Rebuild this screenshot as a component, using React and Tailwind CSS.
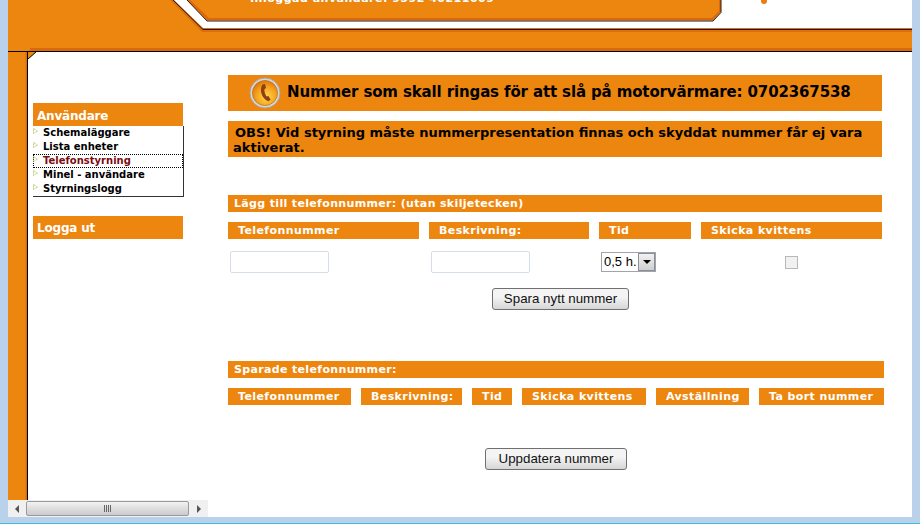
// App.jsx - Motorvärmare telefonstyrning

import React from 'react';

const verdana = "font-['DejaVu_Sans',sans-serif]";

const menuItems = [
  { label: 'Schemaläggare' },
  { label: 'Lista enheter' },
  { label: 'Telefonstyrning', active: true },
  { label: 'Minel - användare' },
  { label: 'Styrningslogg' },
];

const newColumns = [
  { label: 'Telefonnummer', width: 'w-[191px]' },
  { label: 'Beskrivning:', width: 'w-[160px]' },
  { label: 'Tid', width: 'w-[92px]' },
  { label: 'Skicka kvittens', width: 'w-[181px]' },
];

const savedColumns = [
  { label: 'Telefonnummer', width: 'w-[123px]' },
  { label: 'Beskrivning:', width: 'w-[101px]' },
  { label: 'Tid', width: 'w-[40px]' },
  { label: 'Skicka kvittens', width: 'w-[124px]' },
  { label: 'Avställning', width: 'w-[93px]' },
  { label: 'Ta bort nummer', width: 'w-[125px]' },
];

const HeaderArt = () => (
  <svg className="absolute inset-0" width="904" height="52" viewBox="0 0 904 52">
    <rect width="904" height="52" fill="#ec860e" />
    <rect x="22" y="48" width="882" height="3" fill="#d9690c" />
    <polygon points="162,0 194,32 904,32 904,0" fill="#dc6f0c" />
    <polygon points="166,0 195,28 904,28 904,0" fill="#ffffff" />
    <polyline points="165,0 195,29.5 904,29.5" fill="none" stroke="#1a1a1a" strokeWidth="1" />
    <polygon points="179,0 199,20.5 705,20.5 713,12 713,0" fill="#d9690c" />
    <polygon points="182,0 201,18 704,18 711,11 711,0" fill="#ec860e" />
    <polyline points="179,0 199,21 705,21 713,12.5 713,0" fill="none" stroke="#2a1a08" strokeWidth="1" />
    <rect y="51" width="904" height="1" fill="#000000" />
    <circle cx="756" cy="1" r="3" fill="#ec7d12" />
  </svg>
);

const PhoneBadge = () => (
  <svg width="32" height="32" viewBox="0 0 32 32" className="shrink-0">
    <defs>
      <radialGradient id="phoneGlow" cx="55%" cy="65%" r="65%">
        <stop offset="0%" stopColor="#ffd84a" />
        <stop offset="60%" stopColor="#f6a21e" />
        <stop offset="100%" stopColor="#df7408" />
      </radialGradient>
    </defs>
    <circle cx="16" cy="16" r="15" fill="#d8d8d8" stroke="#a8a8a8" strokeWidth="1" />
    <circle cx="16" cy="16" r="12.6" fill="url(#phoneGlow)" stroke="#a86a1a" strokeWidth="0.6" />
    <path
      d="M13.5 7.5 L16 7 L17 11 L15.4 12.2 C15.2 14.6 16 17.4 17.6 19.4 L19.4 19 L21.6 22.4 L19.6 24.2 C16.4 23.8 13.2 20 12.2 15.6 C11.6 12.6 12 9.4 13.5 7.5 Z"
      fill="#8f3f14"
    />
  </svg>
);

const MenuBullet = () => (
  <svg className="absolute left-0 top-[2px]" width="5" height="6" viewBox="0 0 5 6">
    <path d="M0.5 0.5 V5.5 L4.5 3 Z" fill="none" stroke="#b5c26a" strokeWidth="1" strokeDasharray="1 0.6" />
  </svg>
);

const OrangeBar = ({ children, className = '' }) => (
  <div className={`bg-[#ec860e] text-white font-bold text-[11px] leading-[18px] ${className}`}>
    {children}
  </div>
);

const ColumnHead = ({ label, width, pad = 'pl-[11px]' }) => (
  <OrangeBar className={`h-[17px] shrink-0 tracking-[0.4px] ${width} ${pad}`}>{label}</OrangeBar>
);

const WinButton = ({ children, className = '' }) => (
  <button
    type="button"
    className={`h-[22px] rounded-[3px] border border-[#707070] bg-gradient-to-b from-[#f4f4f4] from-40% to-[#d6d6d6] font-['Liberation_Sans',sans-serif] text-[13.33px] leading-[18px] text-[#111111] ${className}`}
  >
    {children}
  </button>
);

const Sidebar = () => (
  <div className="ml-[5px] w-[151px] shrink-0 pt-[51px]">
    <OrangeBar className="h-[23px] w-[150px] pl-1 text-[12px] leading-[27px] tracking-[-0.2px]">Användare</OrangeBar>
    <ul className="h-[71px] border-r border-b border-[#333333] pb-px">
      {menuItems.map((item) => (
        <li
          key={item.label}
          className={`relative h-[14px] pl-[10px] text-[10px] leading-[13px] font-bold ${
            item.active ? 'text-[#7a0c12] outline-1 -outline-offset-1 outline-dotted outline-black' : 'text-black'
          }`}
        >
          <MenuBullet />
          {item.label}
        </li>
      ))}
    </ul>
    <OrangeBar className="mt-[19px] h-[23px] w-[150px] pl-1 text-[12px] leading-[25px] tracking-[-0.2px]">Logga ut</OrangeBar>
  </div>
);

const MainPanel = () => (
  <div className="ml-[44px] w-[656px] pt-[23px] text-black">
    <div className="flex h-[36px] w-[654px] items-center gap-[6px] bg-[#ec860e] pl-[21px] text-[15px] font-bold tracking-[-0.13px]">
      <PhoneBadge />
      <span className="mb-[2px]">Nummer som skall ringas för att slå på motorvärmare: 0702367538</span>
    </div>
    <div className="mt-[10px] h-[36px] w-[654px] bg-[#ec860e] pl-[6px] pt-[4px] text-[13px] leading-[15px] font-bold">
      <span className="pl-[1px]">OBS! Vid styrning måste nummerpresentation finnas och skyddat nummer får ej vara</span>
      <br />
      <span className="-ml-[1px]">aktiverat.</span>
    </div>

    <OrangeBar className="mt-[38px] h-[17px] w-[654px] pl-[6px] tracking-[0.34px]">Lägg till telefonnummer: (utan skiljetecken)</OrangeBar>
    <div className="mt-[10px] flex gap-[10px]">
      {newColumns.map((col) => (
        <ColumnHead key={col.label} label={col.label} width={col.width} pad="pl-[10px]" />
      ))}
    </div>

    <div className="mt-[12px] flex h-[22px] items-center">
      <input type="text" className="ml-[2px] h-[22px] w-[99px] rounded-[2px] border border-[#d5dde6] bg-white" />
      <input type="text" className="ml-[102px] h-[22px] w-[99px] rounded-[2px] border border-[#d5dde6] bg-white" />
      <div className="ml-[71px] flex h-[20px] w-[55px] items-center justify-between border border-[#a0a5ab] bg-white pl-[2px] font-['Liberation_Sans',sans-serif] text-[13px] whitespace-nowrap">
        <span>0,5 h.</span>
        <span className="flex h-[18px] w-[17px] items-center justify-center border border-[#8a8f96] bg-gradient-to-b from-[#f2f2f2] to-[#cfcfcf]">
          <span className="border-x-[4px] border-t-[4px] border-x-transparent border-t-black" />
        </span>
      </div>
      <input
        type="checkbox"
        disabled
        className="ml-[129px] h-[13px] w-[13px] appearance-none border border-[#b8b8b8] bg-[#f1f1f1]"
      />
    </div>

    <div className="mt-[15px] flex">
      <WinButton className="ml-[264px] w-[137px]">Spara nytt nummer</WinButton>
    </div>

    <OrangeBar className="mt-[51px] h-[17px] w-[656px] pl-[6px] tracking-[0.34px]">Sparade telefonnummer:</OrangeBar>
    <div className="mt-[10px] flex gap-[10px]">
      {savedColumns.map((col) => (
        <ColumnHead key={col.label} label={col.label} width={col.width} pad="pl-[10px]" />
      ))}
    </div>

    <div className="mt-[43px] flex">
      <WinButton className="ml-[257px] w-[142px]">Uppdatera nummer</WinButton>
    </div>
  </div>
);

const ScrollBar = () => (
  <div className="flex h-[17px] w-[200px] items-center bg-[#f0f0f0]">
    <div className="flex h-full w-[18px] items-center justify-center">
      <span className="border-y-[4px] border-r-[4px] border-y-transparent border-r-[#555555]" />
    </div>
    <div className="flex h-[15px] w-[163px] items-center justify-center gap-px rounded-[2px] border border-[#9a9a9a] bg-gradient-to-b from-[#f2f2f2] to-[#cbcbcb]">
      <span className="h-[7px] w-px bg-[#666666]" />
      <span className="h-[7px] w-px bg-[#666666]" />
      <span className="h-[7px] w-px bg-[#666666]" />
      <span className="h-[7px] w-px bg-[#666666]" />
    </div>
    <div className="flex h-full w-[19px] items-center justify-center">
      <span className="border-y-[4px] border-l-[4px] border-y-transparent border-l-[#555555]" />
    </div>
  </div>
);

const App = () => {
  return (
    <div className={`h-[524px] w-[920px] overflow-hidden border-b border-[#3cc0d8] bg-[#b9d1ea] px-2 ${verdana}`}>
      <div className="flex h-[517px] w-[904px] flex-col bg-white">
        {/* Header */}
        <div className="relative h-[52px] shrink-0 overflow-hidden">
          <HeaderArt />
          <div className="absolute left-[242px] top-[-10px] text-[11px] font-bold leading-[17px] tracking-[0.5px] text-white">
            Inloggad användare: 9592 40211009
          </div>
        </div>

        {/* Body */}
        <div className="flex h-[448px] shrink-0">
          <div className="h-full w-[20px] shrink-0 border-r border-black bg-gradient-to-r from-[#ec860e] from-88% to-[#d4640c]" />
          <div className="relative flex flex-1">
            <svg className="absolute left-0 top-0" width="8" height="8" viewBox="0 0 8 8">
              <polygon points="0,0 8,0 0,7" fill="#ec860e" />
              <line x1="0" y1="7" x2="8" y2="0" stroke="#000000" strokeWidth="1" />
            </svg>
            <Sidebar />
            <MainPanel />
          </div>
        </div>

        <ScrollBar />
      </div>
    </div>
  );
};

export default App;
